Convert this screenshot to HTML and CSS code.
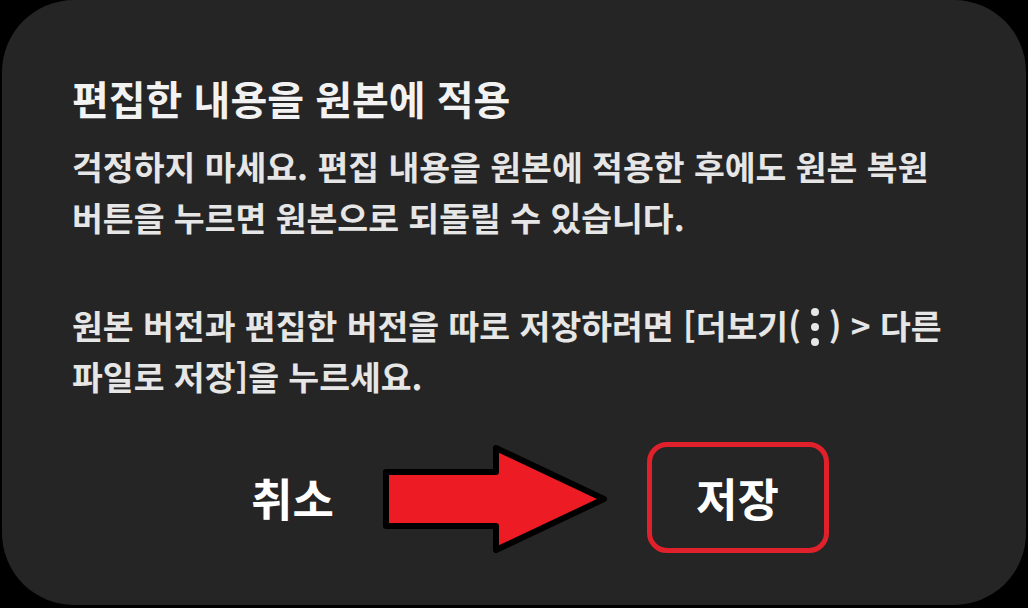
FILE: index.html
```html
<!DOCTYPE html>
<html lang="ko">
<head>
<meta charset="utf-8">
<link rel="stylesheet" href="styles.css">
</head>
<body>
<div class="dialog">
  <h1 class="title">편집한 내용을 원본에 적용</h1>
  <p class="text">걱정하지 마세요. 편집 내용을 원본에 적용한 후에도 원본 복원 버튼을 누르면 원본으로 되돌릴 수 있습니다.</p>
  <p class="text text-second">원본 버전과 편집한 버전을 따로 저장하려면 [더보기(<svg class="more" viewBox="0 0 26 44" width="26" height="44"><circle cx="13" cy="7" r="4"/><circle cx="13" cy="22" r="4"/><circle cx="13" cy="37" r="4"/></svg>) &gt; 다른 파일로 저장]을 누르세요.</p>
  <div class="actions">
    <div class="btn">취소</div>
    <div class="btn"><span class="save">저장</span></div>
    <svg class="arrow" viewBox="0 0 230 114" width="230" height="114">
      <polygon points="6,30 116,30 116,6 224,57 116,108 116,84 6,84" fill="#ed1c24" stroke="#000" stroke-width="6" stroke-linejoin="round"/>
    </svg>
  </div>
</div>
</body>
</html>
```

FILE: styles.css
```css
html, body {
  margin: 0;
  padding: 0;
  background: #000;
}
body {
  width: 1028px;
  height: 608px;
  overflow: hidden;
  font-family: "Noto Sans CJK KR", "Noto Sans", sans-serif;
}
.dialog {
  box-sizing: border-box;
  margin: 0 2px;
  height: 605px;
  background: #252525;
  border-radius: 72px;
  padding: 73px 60px 0 70px;
  display: flex;
  flex-direction: column;
  color: #ececec;
}
.title {
  margin: 0;
  font-size: 40px;
  font-weight: 700;
  line-height: 50px;
  color: #f2f2f2;
}
.text {
  margin: 17px 0 0;
  font-size: 33.5px;
  font-weight: 700;
  line-height: 51px;
  color: #e6e6e6;
}
.text-second {
  margin-top: 57px;
}
.more {
  display: inline-block;
  vertical-align: -10px;
  fill: #e6e6e6;
  margin: 0 1px;
}
.actions {
  position: relative;
  display: flex;
  margin: 38px 6px 0 -2px;
  height: 116px;
  align-items: center;
}
.btn {
  flex: 1;
  display: flex;
  justify-content: center;
  align-items: center;
  font-size: 45px;
  font-weight: 700;
  color: #fff;
}
.save {
  box-sizing: border-box;
  width: 182px;
  height: 111px;
  display: flex;
  justify-content: center;
  align-items: center;
  border: 5px solid #e0212b;
  border-radius: 20px;
}
.arrow {
  position: absolute;
  left: 310px;
  top: 3px;
}
```
